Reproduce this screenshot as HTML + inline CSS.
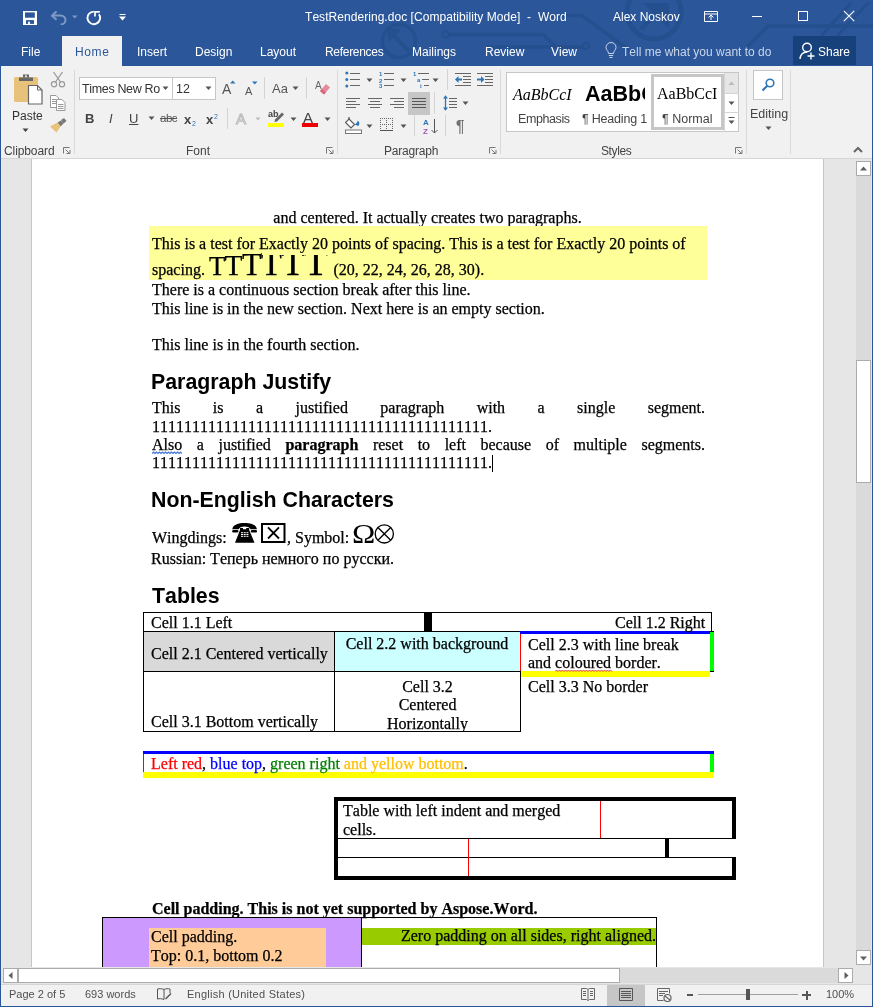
<!DOCTYPE html>
<html><head><meta charset="utf-8">
<style>
*{margin:0;padding:0;box-sizing:border-box;font-kerning:none !important}
html,body{width:873px;height:1007px;overflow:hidden;font-kerning:none;background:#2b579a;font-family:"Liberation Sans",sans-serif}
.a{position:absolute}
.t{position:absolute;white-space:nowrap;line-height:1}
#title{left:0;top:0;width:873px;height:66px;background:#2b579a}
#ribbon{left:1px;top:66px;width:871px;height:93px;background:#f1f1f1;border-bottom:1px solid #d5d5d5}
#doc{left:1px;top:159px;width:871px;height:808px;background:#e6e6e6;overflow:hidden}
#page{left:30px;top:0;width:793px;height:808px;background:#fff;border-left:1px solid #c6c6c6;border-right:1px solid #c6c6c6}
#hs{left:1px;top:967px;width:871px;height:18px;background:#e6e6e6}
#status{left:1px;top:984px;width:871px;height:22px;background:#f1f1f1;border-top:1px solid #d5d5d5}
.ui{color:#fff;font-size:12px}
.rb{color:#444;font-size:12px}
.sep{position:absolute;width:1px;background:#d8d8d8}
.s{position:absolute;white-space:nowrap;font:16px/18px "Liberation Serif",serif;color:#000;-webkit-text-stroke-width:0.25px}
.j{width:553px;text-align:justify;text-align-last:justify}
.h{position:absolute;white-space:nowrap;font:bold 21.33px/24px "Liberation Sans",sans-serif;color:#000}
.big{line-height:0;letter-spacing:-0.6px}
.serif{font-family:"Liberation Serif",serif;color:#000}
.gs{will-change:transform}</style></head><body><div class="gs a" style="left:0;top:0;width:873px;height:1007px">
<div id="title" class="a"></div>
<svg class="a" style="left:0;top:0" width="873" height="66" viewBox="0 0 873 66">
<g fill="none" stroke="#24508f" stroke-width="3.5">
<circle cx="399" cy="41" r="16.5"/>
<path d="M409,51 L392,34" stroke-width="4.5"/><path d="M387,28 L401,29.5 L388.5,42 Z" fill="#24508f" stroke="none"/>
<circle cx="445.5" cy="34.5" r="3.2" stroke-width="2.2"/>
<path d="M449,34.5 H543 L556,47 H582 M487,47 H556"/>
<path d="M540,15.5 H582 L633,53"/>
<circle cx="586" cy="46" r="3.2" stroke-width="2.2"/>
<circle cx="654" cy="12" r="27" stroke-width="5"/>
<path d="M641,29 L662,8" stroke-width="5"/><path d="M643,3 L669,3 L669,29 Z" fill="#24508f" stroke="none"/>
<path d="M747,47 L768,26 H873"/>
<path d="M821,36 L851,3 M837,36 L869,2" stroke-width="3"/>
</g>
</svg>
<svg class="a" style="left:23px;top:11px" width="14" height="14" viewBox="0 0 14 14">
<rect x="0" y="0" width="14" height="14" fill="#fff"/>
<rect x="2" y="1.4" width="9.8" height="5.3" fill="#2b579a"/>
<rect x="3" y="9.1" width="8" height="3.8" fill="#2b579a"/>
<rect x="5" y="10.7" width="2" height="2.2" fill="#fff"/>
</svg>
<svg class="a" style="left:51px;top:11px" width="16" height="14" viewBox="0 0 16 14">
<path d="M1.5,5.5 h8 a5,4.5 0 0 1 0,9" fill="none" stroke="#7d9ac4" stroke-width="2" transform="translate(0,-1)"/>
<path d="M5.5,0.8 L1,5.2 L5.5,9.2" fill="none" stroke="#7d9ac4" stroke-width="2" transform="translate(0,-0.5)"/>
</svg>
<svg class="a" style="left:72px;top:15px" width="6" height="4"><path d="M0,0.5 h5.5 l-2.75,3 z" fill="#7d9ac4"/></svg>
<svg class="a" style="left:86px;top:10px" width="16" height="16" viewBox="0 0 16 16">
<path d="M12.9,4.2 A6.3,6.3 0 1 1 7.8,1.6" fill="none" stroke="#fff" stroke-width="1.9"/>
<path d="M9,6.5 V1.9 H13.8" fill="none" stroke="#fff" stroke-width="1.7"/>
</svg>
<svg class="a" style="left:119px;top:14px" width="7" height="7" viewBox="0 0 7 7"><path d="M0.5,0.5 h6" stroke="#fff"/><path d="M0,2.5 h7 l-3.5,4 z" fill="#fff"/></svg>
<svg class="a" style="left:704px;top:11px" width="14" height="11" viewBox="0 0 14 11">
<path d="M0.5,0.5 h13 v10 h-13 z M0.5,3 h13" fill="none" stroke="#fff" stroke-width="1"/>
<path d="M7,9 v-5 M4.5,6.5 L7,4 L9.5,6.5" fill="none" stroke="#fff" stroke-width="1"/>
</svg>
<div class="a" style="left:752px;top:16px;width:10px;height:1px;background:#fff"></div>
<div class="a" style="left:798px;top:11px;width:10px;height:10px;border:1px solid #fff"></div>
<svg class="a" style="left:843px;top:10px" width="12" height="12" viewBox="0 0 12 12"><path d="M0.8,0.8 L11.2,11.2 M11.2,0.8 L0.8,11.2" stroke="#fff" stroke-width="1.1"/></svg>
<svg class="a" style="left:605px;top:42px" width="12" height="17" viewBox="0 0 12 17">
<path d="M3.5,11.5 C3.5,9 1,8 1,5.5 A5,5 0 0 1 11,5.5 C11,8 8.5,9 8.5,11.5 Z" fill="none" stroke="#c8d5e9" stroke-width="1"/>
<path d="M3.8,13.5 h4.4 M4.5,15.5 h3" stroke="#c8d5e9" stroke-width="1"/></svg>

<!-- title text -->
<div class="t ui" style="left:305px;top:11px;letter-spacing:0.05px">TestRendering.doc [Compatibility Mode]&nbsp; -&nbsp; Word</div>
<div class="t ui" style="left:613px;top:11px;">Alex Noskov</div>
<!-- tabs -->
<div class="a" style="left:62px;top:36px;width:60px;height:30px;background:#f1f1f1"></div>
<div class="t ui" style="left:21px;top:46px;">File</div>
<div class="t ui" style="left:75px;top:46px;color:#2b579a;letter-spacing:0.6px">Home</div>
<div class="t ui" style="left:137px;top:46px;">Insert</div>
<div class="t ui" style="left:195px;top:46px;">Design</div>
<div class="t ui" style="left:260px;top:46px;">Layout</div>
<div class="t ui" style="left:325px;top:46px;letter-spacing:-0.3px">References</div>
<div class="t ui" style="left:412px;top:46px;">Mailings</div>
<div class="t ui" style="left:485px;top:46px;">Review</div>
<div class="t ui" style="left:551px;top:46px;">View</div>
<div class="t ui" style="left:622px;top:46px;color:#c8d5e9">Tell me what you want to do</div>
<div class="a" style="left:793px;top:36px;width:63px;height:29px;background:#17417a"></div>
<svg class="a" style="left:799px;top:42px" width="18" height="18" viewBox="0 0 18 18">
<circle cx="8" cy="5.5" r="4.3" fill="none" stroke="#fff" stroke-width="1.4"/>
<path d="M1,17 C1.5,12.5 4,10 8,10" fill="none" stroke="#fff" stroke-width="1.4"/>
<path d="M12,10.5 v7 M8.5,14 h7" stroke="#fff" stroke-width="1.4"/></svg>
<div class="t ui" style="left:818px;top:46px;">Share</div>

<div id="ribbon" class="a"></div>
<!-- clipboard -->
<svg class="a" style="left:12px;top:72px" width="34" height="34" viewBox="0 0 34 34">
<rect x="2" y="5" width="24" height="25" rx="1.5" fill="#e8c17a"/>
<path d="M7,5.5 h14 v3.5 h-14 z" fill="#666"/>
<path d="M11,2.5 h6 v3 h-6 z" fill="#666"/><circle cx="14" cy="4.2" r="1" fill="#f1f1f1"/>
<path d="M16.5,13.5 h9 l4.5,4.5 v14 h-13.5 z" fill="#fff" stroke="#666" stroke-width="1.2"/>
<path d="M25.5,13.5 v4.5 h4.5" fill="none" stroke="#666" stroke-width="1"/>
</svg>
<div class="t rb" style="left:12px;top:110px;font-size:12px;color:#333">Paste</div>
<svg class="a" style="left:22px;top:128px" width="7" height="5"><path d="M0.5,0.5 h6 l-3,3.5 z" fill="#444"/></svg>
<svg class="a" style="left:50px;top:71px" width="16" height="17" viewBox="0 0 16 17">
<path d="M3.5,1 L10.5,11 M12.5,1 L5.5,11" stroke="#9a9a9a" stroke-width="1.3"/>
<circle cx="4" cy="13.3" r="2.6" fill="none" stroke="#9a9a9a" stroke-width="1.2"/>
<circle cx="12" cy="13.3" r="2.6" fill="none" stroke="#9a9a9a" stroke-width="1.2"/>
</svg>
<svg class="a" style="left:50px;top:95px" width="16" height="16" viewBox="0 0 16 16">
<path d="M0.5,0.5 h5.5 l2.5,2.5 v9.5 h-8 z" fill="#fff" stroke="#999"/>
<path d="M6.5,4.5 h5.5 l3,3 v8 h-8.5 z" fill="#fff" stroke="#999"/>
<path d="M2,4.5 h4 M2,6.5 h4 M2,8.5 h4 M8,9.5 h5.5 M8,11.5 h5.5 M8,13.5 h5.5" stroke="#999" stroke-width="1"/>
</svg>
<svg class="a" style="left:50px;top:118px" width="17" height="15" viewBox="0 0 17 15">
<path d="M11,2 L14,0 L16.5,3 L13.5,5.5 Z" fill="#777"/>
<path d="M7.5,4.5 L11,2.5 L13.5,5.5 L10.5,8.5 Z" fill="#777"/>
<path d="M0,8.5 L7.5,4.5 L10.5,8.5 L6.5,14.5 Z" fill="#e8c17a"/>
</svg>
<div class="t rb" style="left:4px;top:145px;letter-spacing:-0.1px">Clipboard</div>
<svg class="a" style="left:63px;top:147px" width="8" height="7" viewBox="0 0 8 7"><path d="M0.5,6.5 v-6 h6 M0.5,0.5" fill="none" stroke="#777"/><path d="M2.5,2.5 L6.5,6.5 M3.5,6.5 h3.5 v-3.5" fill="none" stroke="#777"/></svg>
<div class="sep" style="left:74px;top:70px;height:84px"></div>
<!-- font -->
<div class="a" style="left:79px;top:77px;width:137px;height:23px;background:#fff;border:1px solid #c6c6c6"></div>
<div class="a" style="left:172px;top:77px;width:1px;height:23px;background:#c6c6c6"></div>
<div class="t" style="left:82px;top:83px;font-size:12.5px;color:#333;letter-spacing:-0.35px">Times New Ro</div>
<svg class="a" style="left:162px;top:86px" width="7" height="5"><path d="M0.5,0.5 h6 l-3,3.5 z" fill="#555"/></svg>
<div class="t" style="left:176px;top:83px;font-size:12.5px;color:#333">12</div>
<svg class="a" style="left:205px;top:86px" width="7" height="5"><path d="M0.5,0.5 h6 l-3,3.5 z" fill="#555"/></svg>
<div class="t" style="left:222px;top:82px;font-size:14px;color:#555">A</div>
<svg class="a" style="left:230px;top:80px" width="6" height="4"><path d="M0,3.5 h5.5 l-2.75,-3 z" fill="#2e75b6"/></svg>
<div class="t" style="left:245px;top:86px;font-size:11px;color:#555">A</div>
<svg class="a" style="left:252px;top:81px" width="6" height="4"><path d="M0,0.5 h5.5 l-2.75,3 z" fill="#2e75b6"/></svg>
<div class="sep" style="left:264px;top:77px;height:22px;background:#d4d4d4"></div>
<div class="t" style="left:272px;top:82px;font-size:13px;color:#555">Aa</div>
<svg class="a" style="left:292px;top:86px" width="7" height="5"><path d="M0.5,0.5 h6 l-3,3.5 z" fill="#555"/></svg>
<div class="sep" style="left:306px;top:77px;height:22px;background:#d4d4d4"></div>
<svg class="a" style="left:315px;top:80px" width="16" height="16" viewBox="0 0 16 16">
<text x="0" y="9" font-family="Liberation Sans" font-size="10" fill="#666">A</text>
<path d="M5,11 L11,4 L15,7.5 L9,14.5 Z" fill="#e58a9a"/><path d="M5,11 L7,9 L11,12.5 L9,14.5 Z" fill="#d7667c"/>
</svg>
<div class="t" style="left:85px;top:112px;font-size:13px;font-weight:bold;color:#444">B</div>
<div class="t" style="left:109px;top:112px;font-size:13px;font-style:italic;color:#444">I</div>
<div class="t" style="left:129px;top:112px;font-size:13px;color:#444;text-decoration:underline">U</div>
<svg class="a" style="left:148px;top:116px" width="7" height="5"><path d="M0.5,0.5 h6 l-3,3.5 z" fill="#555"/></svg>
<div class="t" style="left:160px;top:113px;font-size:11.5px;color:#555;text-decoration:line-through;letter-spacing:-0.5px">abc</div>
<div class="t" style="left:184px;top:113px;font-size:13px;font-weight:bold;color:#444">x</div>
<div class="t" style="left:192px;top:120px;font-size:7px;color:#2e75b6">2</div>
<div class="t" style="left:206px;top:113px;font-size:13px;font-weight:bold;color:#444">x</div>
<div class="t" style="left:214px;top:113px;font-size:7px;color:#2e75b6">2</div>
<div class="sep" style="left:227px;top:108px;height:21px;background:#d4d4d4"></div>
<div class="t" style="left:236px;top:111px;font-size:15px;color:#f4f4f4;-webkit-text-stroke:1px #bbb">A</div>
<svg class="a" style="left:255px;top:117px" width="6" height="4"><path d="M0.5,0.5 h5 l-2.5,3 z" fill="#bbb"/></svg>
<div class="t" style="left:268px;top:110px;font-size:9px;color:#444;font-weight:bold">ab</div>
<svg class="a" style="left:272px;top:110px" width="12" height="12" viewBox="0 0 12 12"><path d="M3,9.5 L10,2.5 L12,4.5 L5,11.5 L2.5,12 Z" fill="#666"/></svg>
<div class="a" style="left:268px;top:123px;width:16px;height:4px;background:#ffff00"></div>
<svg class="a" style="left:290px;top:117px" width="7" height="5"><path d="M0.5,0.5 h6 l-3,3.5 z" fill="#555"/></svg>
<div class="t" style="left:303px;top:110px;font-size:15px;color:#444">A</div>
<div class="a" style="left:302px;top:123px;width:16px;height:4px;background:#e00"></div>
<svg class="a" style="left:324px;top:117px" width="7" height="5"><path d="M0.5,0.5 h6 l-3,3.5 z" fill="#555"/></svg>
<div class="t rb" style="left:186px;top:145px">Font</div>
<svg class="a" style="left:326px;top:147px" width="8" height="7" viewBox="0 0 8 7"><path d="M0.5,6.5 v-6 h6" fill="none" stroke="#777"/><path d="M2.5,2.5 L6.5,6.5 M3.5,6.5 h3.5 v-3.5" fill="none" stroke="#777"/></svg>
<div class="sep" style="left:337px;top:70px;height:84px"></div>
<!-- paragraph -->
<svg class="a" style="left:345px;top:71px" width="16" height="17" viewBox="0 0 16 17">
<circle cx="1.8" cy="2" r="1.5" fill="#2e75b6"/><circle cx="1.8" cy="8.5" r="1.5" fill="#2e75b6"/><circle cx="1.8" cy="15" r="1.5" fill="#2e75b6"/>
<path d="M5,2.5 h10 M5,8.5 h10 M5,14.5 h10" stroke="#666" stroke-width="1"/></svg>
<svg class="a" style="left:366px;top:78px" width="7" height="5"><path d="M0.5,0.5 h6 l-3,3.5 z" fill="#555"/></svg>
<svg class="a" style="left:379px;top:71px" width="16" height="17" viewBox="0 0 16 17">
<text x="0" y="5" font-size="6" font-family="Liberation Sans" font-weight="bold" fill="#2e75b6">1</text>
<text x="0" y="11.5" font-size="6" font-family="Liberation Sans" font-weight="bold" fill="#2e75b6">2</text>
<text x="0" y="17" font-size="6" font-family="Liberation Sans" font-weight="bold" fill="#2e75b6">3</text>
<path d="M5,2.5 h10 M5,8.5 h10 M5,14.5 h10" stroke="#666" stroke-width="1"/></svg>
<svg class="a" style="left:400px;top:78px" width="7" height="5"><path d="M0.5,0.5 h6 l-3,3.5 z" fill="#555"/></svg>
<svg class="a" style="left:413px;top:71px" width="17" height="17" viewBox="0 0 17 17">
<text x="0" y="5" font-size="6" font-family="Liberation Sans" font-weight="bold" fill="#2e75b6">1</text>
<text x="4" y="11" font-size="6" font-family="Liberation Sans" font-weight="bold" fill="#2e75b6">a</text>
<text x="7" y="17" font-size="6" font-family="Liberation Sans" font-weight="bold" fill="#2e75b6">i</text>
<path d="M5,2.5 h11 M9,8.5 h7 M11,14.5 h5" stroke="#666" stroke-width="1"/></svg>
<svg class="a" style="left:432px;top:78px" width="7" height="5"><path d="M0.5,0.5 h6 l-3,3.5 z" fill="#555"/></svg>
<div class="sep" style="left:447px;top:69px;height:21px;background:#d4d4d4"></div>
<svg class="a" style="left:455px;top:73px" width="17" height="14" viewBox="0 0 17 14">
<path d="M0,0.5 h16 M8,3.5 h8 M8,6.5 h8 M8,9.5 h8 M0,12.5 h16" stroke="#666" stroke-width="1"/>
<path d="M0,6.5 L3.5,3 L3.5,10 Z" fill="#2e75b6"/><path d="M3,6.5 h4" stroke="#2e75b6" stroke-width="2"/></svg>
<svg class="a" style="left:477px;top:73px" width="17" height="14" viewBox="0 0 17 14">
<path d="M0,0.5 h16 M8,3.5 h8 M8,6.5 h8 M8,9.5 h8 M0,12.5 h16" stroke="#666" stroke-width="1"/>
<path d="M7.5,6.5 L4,3 L4,10 Z" fill="#2e75b6"/><path d="M0,6.5 h4.5" stroke="#2e75b6" stroke-width="2"/></svg>
<svg class="a" style="left:345px;top:97px" width="16" height="12" viewBox="0 0 16 12">
<path d="M1,1.5 h14 M1,4.5 h10 M1,7.5 h14 M1,10.5 h10" stroke="#666" stroke-width="1"/></svg>
<svg class="a" style="left:367px;top:97px" width="16" height="12" viewBox="0 0 16 12">
<path d="M1,1.5 h14 M3,4.5 h10 M1,7.5 h14 M3,10.5 h10" stroke="#666" stroke-width="1"/></svg>
<svg class="a" style="left:389px;top:97px" width="16" height="12" viewBox="0 0 16 12">
<path d="M1,1.5 h14 M5,4.5 h10 M1,7.5 h14 M5,10.5 h10" stroke="#666" stroke-width="1"/></svg>
<div class="a" style="left:408px;top:92px;width:22px;height:23px;background:#c6c6c6"></div>
<svg class="a" style="left:412px;top:97px" width="16" height="12" viewBox="0 0 16 12">
<path d="M0,1.5 h14 M0,4.5 h14 M0,7.5 h14 M0,10.5 h14" stroke="#555" stroke-width="1"/></svg>
<div class="sep" style="left:434px;top:92px;height:22px;background:#d4d4d4"></div>
<svg class="a" style="left:443px;top:95px" width="15" height="17" viewBox="0 0 15 17">
<path d="M2.5,2 v13" stroke="#2e75b6" stroke-width="1.3"/><path d="M0,3.5 L2.5,0.3 L5,3.5 Z M0,12.5 L2.5,15.7 L5,12.5 Z" fill="#2e75b6"/>
<path d="M6,3.5 h8 M6,6.5 h8 M6,9.5 h8 M6,12.5 h8" stroke="#666" stroke-width="1"/></svg>
<svg class="a" style="left:462px;top:101px" width="7" height="5"><path d="M0.5,0.5 h6 l-3,3.5 z" fill="#555"/></svg>
<svg class="a" style="left:345px;top:117px" width="17" height="17" viewBox="0 0 17 17">
<path d="M4,2 L9.5,7.5 L6,11 L0.5,5.5 Z" fill="#fff" stroke="#555" stroke-width="1.1"/>
<path d="M4,2 L4,0" stroke="#555" stroke-width="1.2"/>
<path d="M9.5,7.5 C12,6 13,4.5 12.5,3.5 C14.5,4.5 15,6.5 13.5,9" fill="#2e75b6"/>
<rect x="0.5" y="13" width="16" height="3.5" fill="#fff" stroke="#777" stroke-width="1"/></svg>
<svg class="a" style="left:366px;top:124px" width="7" height="5"><path d="M0.5,0.5 h6 l-3,3.5 z" fill="#555"/></svg>
<svg class="a" style="left:380px;top:118px" width="14" height="14" viewBox="0 0 14 14"><g fill="#666"><rect x="0" y="0" width="1" height="1"/><rect x="2" y="0" width="1" height="1"/><rect x="4" y="0" width="1" height="1"/><rect x="6" y="0" width="1" height="1"/><rect x="8" y="0" width="1" height="1"/><rect x="10" y="0" width="1" height="1"/><rect x="12" y="0" width="1" height="1"/><rect x="0" y="2" width="1" height="1"/><rect x="6" y="2" width="1" height="1"/><rect x="12" y="2" width="1" height="1"/><rect x="0" y="4" width="1" height="1"/><rect x="6" y="4" width="1" height="1"/><rect x="12" y="4" width="1" height="1"/><rect x="0" y="6" width="1" height="1"/><rect x="2" y="6" width="1" height="1"/><rect x="4" y="6" width="1" height="1"/><rect x="6" y="6" width="1" height="1"/><rect x="8" y="6" width="1" height="1"/><rect x="10" y="6" width="1" height="1"/><rect x="12" y="6" width="1" height="1"/><rect x="0" y="8" width="1" height="1"/><rect x="6" y="8" width="1" height="1"/><rect x="12" y="8" width="1" height="1"/><rect x="0" y="10" width="1" height="1"/><rect x="6" y="10" width="1" height="1"/><rect x="12" y="10" width="1" height="1"/></g>
<rect x="0" y="12" width="13" height="1" fill="#555"/></svg>
<svg class="a" style="left:400px;top:124px" width="7" height="5"><path d="M0.5,0.5 h6 l-3,3.5 z" fill="#555"/></svg>
<div class="sep" style="left:414px;top:115px;height:21px;background:#d4d4d4"></div>
<svg class="a" style="left:423px;top:118px" width="15" height="16" viewBox="0 0 15 16">
<text x="0" y="7" font-size="8" font-family="Liberation Sans" font-weight="bold" fill="#2e75b6">A</text>
<text x="0" y="15.5" font-size="8" font-family="Liberation Sans" font-weight="bold" fill="#9b59b6">Z</text>
<path d="M11.5,1 v14 M8.5,12 L11.5,15 L14.5,12" fill="none" stroke="#555" stroke-width="1"/></svg>
<div class="sep" style="left:445px;top:115px;height:21px;background:#d4d4d4"></div>
<div class="t" style="left:456px;top:119px;font-size:16px;color:#707070;-webkit-text-stroke:0.2px #707070">&#182;</div>
<div class="t rb" style="left:384px;top:145px;letter-spacing:-0.2px">Paragraph</div>
<svg class="a" style="left:489px;top:147px" width="8" height="7" viewBox="0 0 8 7"><path d="M0.5,6.5 v-6 h6" fill="none" stroke="#777"/><path d="M2.5,2.5 L6.5,6.5 M3.5,6.5 h3.5 v-3.5" fill="none" stroke="#777"/></svg>
<div class="sep" style="left:500px;top:70px;height:84px"></div>
<!-- styles -->
<div class="a" style="left:506px;top:72px;width:233px;height:60px;background:#fff;border:1px solid #c6c6c6"></div>
<div class="a" style="left:651px;top:74px;width:73px;height:56px;border:3px solid #c6c6c6"></div>
<div class="a" style="left:724px;top:73px;width:14px;height:20px;background:#e6e6e6;border-left:1px solid #d4d4d4"></div>
<svg class="a" style="left:728px;top:81px" width="7" height="5"><path d="M0.5,4 h6 l-3,-3.5 z" fill="#bbb"/></svg>
<div class="a" style="left:724px;top:93px;width:15px;height:1px;background:#d4d4d4"></div>
<div class="a" style="left:724px;top:93px;width:1px;height:39px;background:#d4d4d4"></div>
<svg class="a" style="left:728px;top:101px" width="7" height="5"><path d="M0.5,0.5 h6 l-3,3.5 z" fill="#555"/></svg>
<div class="a" style="left:724px;top:112px;width:15px;height:1px;background:#d4d4d4"></div>
<svg class="a" style="left:728px;top:117px" width="7" height="9"><path d="M0.5,0.5 h6" stroke="#555"/><path d="M0.5,3.5 h6 l-3,3.5 z" fill="#555"/></svg>
<div class="t" style="left:513px;top:86px;font:italic 16px 'Liberation Serif';color:#000">AaBbCcI</div>
<div class="t" style="left:585px;top:82px;width:60px;overflow:hidden;font:bold 21.5px 'Liberation Sans';color:#000">AaBbC</div>
<div class="t" style="left:657px;top:85px;font:16px 'Liberation Serif';color:#000">AaBbCcI</div>
<div class="t rb" style="left:518px;top:113px;font-size:12.5px;letter-spacing:-0.4px">Emphasis</div>
<div class="t rb" style="left:582px;top:113px;font-size:12.5px;letter-spacing:-0.2px">&#182; Heading 1</div>
<div class="t rb" style="left:662px;top:113px;font-size:12.5px">&#182; Normal</div>
<div class="t rb" style="left:601px;top:145px;letter-spacing:-0.4px">Styles</div>
<svg class="a" style="left:735px;top:147px" width="8" height="7" viewBox="0 0 8 7"><path d="M0.5,6.5 v-6 h6" fill="none" stroke="#777"/><path d="M2.5,2.5 L6.5,6.5 M3.5,6.5 h3.5 v-3.5" fill="none" stroke="#777"/></svg>
<div class="sep" style="left:746px;top:70px;height:84px"></div>
<!-- editing -->
<div class="a" style="left:753px;top:70px;width:30px;height:30px;background:#fff;border:1px solid #c6c6c6"></div>
<svg class="a" style="left:760px;top:77px" width="16" height="16" viewBox="0 0 16 16">
<circle cx="10" cy="6" r="3.8" fill="none" stroke="#2e75b6" stroke-width="1.6"/><path d="M7.3,8.7 L2.5,13.5" stroke="#2e75b6" stroke-width="2"/></svg>
<div class="t rb" style="left:750px;top:108px;font-size:12.5px">Editing</div>
<svg class="a" style="left:765px;top:126px" width="7" height="5"><path d="M0.5,0.5 h6 l-3,3.5 z" fill="#555"/></svg>
<div class="sep" style="left:790px;top:70px;height:84px"></div>
<svg class="a" style="left:853px;top:146px" width="10" height="7" viewBox="0 0 10 7"><path d="M1,6 L5,2 L9,6" fill="none" stroke="#666" stroke-width="2"/></svg>


<div id="doc" class="a"><div id="page" class="a"></div>
<div class="a" style="left:-1px;top:-159px;width:873px;height:1007px">
<div class="s" style="left:0;width:855px;top:209px;text-align:center">and centered. It actually creates two paragraphs.</div>
<div class="a" style="left:149px;top:226px;width:558px;height:54px;background:#ffff99"></div>
<div class="s" style="left:152px;top:235px">This is a test for Exactly 20 points of spacing. This is a test for Exactly 20 points of</div>
<div class="a" style="left:149px;top:253px;width:558px;height:27px;overflow:hidden">
 <div class="s" style="left:3px;top:8px">spacing. <span class="big" style="font-size:26.67px">T</span><span class="big" style="font-size:29.33px">T</span><span class="big" style="font-size:32px">T</span><span class="big" style="font-size:34.67px">T</span><span class="big" style="font-size:37.33px">T</span><span class="big" style="font-size:40px">T</span><span style="margin-left:2px"> (20, 22, 24, 26, 28, 30).</span></div>
</div>
<div class="a" style="left:262px;top:253px;width:70px;height:2px;background:#ffff99"></div>
<div class="s" style="left:152px;top:281px">There is a continuous section break after this line.</div>
<div class="s" style="left:152px;top:300px">This line is in the new section. Next here is an empty section.</div>
<div class="s" style="left:152px;top:336px">This line is in the fourth section.</div>
<div class="h" style="left:151px;top:370px">Paragraph Justify</div>
<div class="s j" style="left:152px;top:399px">This is a justified paragraph with a single segment.</div>
<div class="s" style="left:152px;top:418px">111111111111111111111111111111111111111111.</div>
<div class="s j" style="left:152px;top:436px"><span style="position:relative">Also<svg class="a" style="left:0;top:15px" width="30" height="4" viewBox="0 0 30 4"><path d="M0 2.5 L1.5 1 L3 2.5 L4.5 1 L6 2.5 L7.5 1 L9 2.5 L10.5 1 L12 2.5 L13.5 1 L15 2.5 L16.5 1 L18 2.5 L19.5 1 L21 2.5 L22.5 1 L24 2.5 L25.5 1 L27 2.5 L28.5 1 L30 2.5" fill="none" stroke="#3f73d9" stroke-width="1.2"/></svg></span> a justified <b>paragraph</b> reset to left because of multiple segments.</div>
<div class="s" style="left:152px;top:454px">111111111111111111111111111111111111111111.<span style="display:inline-block;width:1px;height:17px;background:#000;vertical-align:-4px"></span></div>
<div class="h" style="left:151px;top:488px">Non-English Characters</div>
<div class="s" style="left:152px;top:529px">Wingdings: </div>
<div class="s" style="left:287px;top:529px">, Symbol: </div>
<div class="s" style="left:151px;top:550px">Russian: Теперь немного по русски.</div>
<div class="h" style="left:152px;top:584px">Tables</div>
<svg class="a" style="left:232px;top:523px" width="26" height="20" viewBox="0 0 26 20">
<path d="M0.3,6.3 C0.8,1.6 6.5,0 12.6,0 C18.7,0 24.4,1.6 24.9,6.3 L18.6,6.3 C17.4,4.2 15.2,3.6 12.6,3.6 C10,3.6 7.8,4.2 6.6,6.3 Z" fill="#000"/>
<rect x="0.2" y="6.9" width="6.2" height="2.6" rx="1.2" fill="#000"/>
<rect x="18.8" y="6.9" width="6.2" height="2.6" rx="1.2" fill="#000"/>
<path d="M8,4.9 L11,4.9 L11,6.3 L14.2,6.3 L14.2,4.9 L17.2,4.9 L17.2,7 L22.5,19.8 L3,19.8 L8,7 Z" fill="#000"/>
<g fill="#fff"><rect x="9" y="9.2" width="2" height="1"/><rect x="11.7" y="9.2" width="2" height="1"/><rect x="14.4" y="9.2" width="2" height="1"/>
<rect x="9" y="11" width="2" height="1"/><rect x="11.7" y="11" width="2" height="1"/><rect x="14.4" y="11" width="2" height="1"/>
<rect x="9" y="12.8" width="2" height="1"/><rect x="11.7" y="12.8" width="2" height="1"/><rect x="14.4" y="12.8" width="2" height="1"/></g>
</svg>
<svg class="a" style="left:261px;top:523px" width="25" height="20" viewBox="0 0 25 20">
<rect x="1" y="1" width="22.5" height="18" fill="none" stroke="#000" stroke-width="2"/>
<path d="M7,4.3 L18,15.5 M18,4.3 L7,15.5" stroke="#000" stroke-width="1.8"/>
</svg>
<div class="a" style="left:352px;top:519px;font:28px/30px 'Liberation Serif';color:#000;transform:scaleX(1.12);transform-origin:0 0">&#937;</div>
<svg class="a" style="left:374px;top:524px" width="21" height="20" viewBox="0 0 21 20">
<circle cx="10.3" cy="9.9" r="9.1" fill="none" stroke="#000" stroke-width="1.3"/>
<path d="M3.9,3.5 L16.7,16.3 M16.7,3.5 L3.9,16.3" stroke="#000" stroke-width="1.3"/>
</svg>
<!-- Table 1 -->
<div class="a" style="left:143px;top:632px;width:191px;height:39px;background:#d9d9d9"></div>
<div class="a" style="left:334px;top:632px;width:186px;height:39px;background:#ccffff"></div>
<div class="a" style="left:143px;top:612px;width:569px;height:1px;background:#000"></div>
<div class="a" style="left:143px;top:631px;width:377px;height:1px;background:#000"></div>
<div class="a" style="left:143px;top:671px;width:377px;height:1px;background:#000"></div>
<div class="a" style="left:143px;top:731px;width:378px;height:1px;background:#000"></div>
<div class="a" style="left:143px;top:612px;width:1px;height:120px;background:#000"></div>
<div class="a" style="left:711px;top:612px;width:1px;height:20px;background:#000"></div>
<div class="a" style="left:424px;top:612px;width:8px;height:20px;background:#000"></div>
<div class="a" style="left:334px;top:631px;width:1px;height:101px;background:#000"></div>
<div class="a" style="left:520px;top:671px;width:1px;height:61px;background:#000"></div>
<div class="a" style="left:520px;top:634px;width:1px;height:37px;background:#f00"></div>
<div class="a" style="left:520px;top:631px;width:190px;height:3px;background:#00f"></div>
<div class="a" style="left:710px;top:631px;width:4px;height:41px;background:#000"></div>
<div class="a" style="left:710px;top:632px;width:4px;height:39px;background:#0f0"></div>
<div class="a" style="left:521px;top:671px;width:189px;height:6px;background:#ff0"></div>
<div class="s" style="left:151px;top:614px">Cell 1.1 Left</div>
<div class="s" style="left:615px;top:614px;width:90px;text-align:right">Cell 1.2 Right</div>
<div class="s" style="left:151px;top:645px">Cell 2.1 Centered vertically</div>
<div class="s" style="left:334px;top:635px;width:186px;text-align:center">Cell 2.2 with background</div>
<div class="s" style="left:528px;top:636px">Cell 2.3 with line break</div>
<div class="s" style="left:528px;top:654px">and <span style="position:relative">coloured<svg class="a" style="left:0;top:15px" width="58" height="4" viewBox="0 0 58 4"><path d="M0 2.5 L1.5 1 L3 2.5 L4.5 1 L6 2.5 L7.5 1 L9 2.5 L10.5 1 L12 2.5 L13.5 1 L15 2.5 L16.5 1 L18 2.5 L19.5 1 L21 2.5 L22.5 1 L24 2.5 L25.5 1 L27 2.5 L28.5 1 L30 2.5 L31.5 1 L33 2.5 L34.5 1 L36 2.5 L37.5 1 L39 2.5 L40.5 1 L42 2.5 L43.5 1 L45 2.5 L46.5 1 L48 2.5 L49.5 1 L51 2.5 L52.5 1 L54 2.5 L55.5 1 L57 2.5" fill="none" stroke="#e03030" stroke-width="1"/></svg></span> border.</div>
<div class="a" style="left:144px;top:672px;width:190px;height:59px;overflow:hidden"><div class="s" style="left:7px;top:41px">Cell 3.1 Bottom vertically</div></div>
<div class="a" style="left:335px;top:672px;width:185px;height:59px;overflow:hidden">
<div class="s" style="left:0;top:6px;width:185px;text-align:center">Cell 3.2</div>
<div class="s" style="left:0;top:24px;width:185px;text-align:center">Centered</div>
<div class="s" style="left:0;top:43px;width:185px;text-align:center">Horizontally</div></div>
<div class="s" style="left:528px;top:678px">Cell 3.3 No border</div>
<!-- colored border paragraph -->
<div class="a" style="left:143px;top:751px;width:571px;height:3px;background:#00f"></div>
<div class="a" style="left:143px;top:754px;width:1px;height:18px;background:#f00"></div>
<div class="a" style="left:710px;top:754px;width:4px;height:18px;background:#0f0"></div>
<div class="a" style="left:143px;top:772px;width:571px;height:6px;background:#ff0"></div>
<div class="s" style="left:151px;top:755px"><span style="color:#f00">Left red</span>, <span style="color:#00f">blue top</span>, <span style="color:#008000">green right</span> <span style="color:#ffc000">and yellow bottom</span>.</div>
<!-- table with left indent -->
<div class="a" style="left:334px;top:797px;width:402px;height:4px;background:#000"></div>
<div class="a" style="left:334px;top:797px;width:4px;height:83px;background:#000"></div>
<div class="a" style="left:334px;top:876px;width:402px;height:4px;background:#000"></div>
<div class="a" style="left:732px;top:797px;width:4px;height:42px;background:#000"></div>
<div class="a" style="left:732px;top:857px;width:4px;height:23px;background:#000"></div>
<div class="a" style="left:338px;top:838px;width:398px;height:1px;background:#000"></div>
<div class="a" style="left:338px;top:857px;width:398px;height:1px;background:#000"></div>
<div class="a" style="left:665px;top:839px;width:4px;height:18px;background:#000"></div>
<div class="a" style="left:600px;top:801px;width:1px;height:37px;background:#f00"></div>
<div class="a" style="left:468px;top:839px;width:1px;height:37px;background:#f00"></div>
<div class="s" style="left:343px;top:802px">Table with left indent and merged</div>
<div class="s" style="left:343px;top:821px">cells.</div>
<!-- cell padding -->
<div class="s" style="left:152px;top:900px;font-weight:bold">Cell padding. This is not yet supported by Aspose.Word.</div>
<div class="a" style="left:102px;top:917px;width:555px;height:1px;background:#000"></div>
<div class="a" style="left:102px;top:917px;width:1px;height:60px;background:#000"></div>
<div class="a" style="left:361px;top:917px;width:1px;height:60px;background:#000"></div>
<div class="a" style="left:656px;top:917px;width:1px;height:60px;background:#000"></div>
<div class="a" style="left:103px;top:918px;width:258px;height:60px;background:#cc99ff"></div>
<div class="a" style="left:149px;top:928px;width:177px;height:50px;background:#ffcc99"></div>
<div class="a" style="left:362px;top:928px;width:294px;height:17px;background:#99cc00"></div>
<div class="s" style="left:151px;top:928px">Cell padding.</div>
<div class="s" style="left:151px;top:947px">Top: 0.1, bottom 0.2</div>
<div class="s" style="left:400px;top:927px;width:256px;text-align:right">Zero padding on all sides, right aligned.</div>

</div>
</div>
<div id="hs" class="a"></div>
<div class="a" style="left:856px;top:176px;width:15px;height:774px;background:#dadada"></div>
<div class="a" style="left:856px;top:161px;width:15px;height:15px;background:#fff;border:1px solid #ababab"></div>
<svg class="a" style="left:860px;top:166px" width="8" height="5"><path d="M0,4.5 h7 l-3.5,-4 z" fill="#606060"/></svg>
<div class="a" style="left:856px;top:360px;width:15px;height:123px;background:#fff;border:1px solid #ababab"></div>
<div class="a" style="left:856px;top:950px;width:15px;height:15px;background:#fff;border:1px solid #ababab"></div>
<svg class="a" style="left:860px;top:956px" width="8" height="5"><path d="M0,0.5 h7 l-3.5,4 z" fill="#606060"/></svg>
<div class="a" style="left:3px;top:968px;width:850px;height:15px;background:#dadada"></div>
<div class="a" style="left:3px;top:968px;width:15px;height:15px;background:#fff;border:1px solid #ababab"></div>
<svg class="a" style="left:8px;top:972px" width="5" height="8"><path d="M4.5,0 v7 l-4,-3.5 z" fill="#606060"/></svg>
<div class="a" style="left:18px;top:968px;width:602px;height:15px;background:#fff;border:1px solid #ababab"></div>
<div class="a" style="left:838px;top:968px;width:15px;height:15px;background:#fff;border:1px solid #ababab"></div>
<svg class="a" style="left:844px;top:972px" width="5" height="8"><path d="M0.5,0 v7 l4,-3.5 z" fill="#606060"/></svg>

<div id="status" class="a"></div>
<div class="t" style="left:9px;top:989px;font-size:11px;color:#505050">Page 2 of 5</div>
<div class="t" style="left:85px;top:989px;font-size:11px;color:#505050">693 words</div>
<svg class="a" style="left:157px;top:988px" width="15" height="12" viewBox="0 0 15 12">
<path d="M0.5,1 C2.5,0.5 4.5,0.5 7,1.5 V11.5 C4.5,10.5 2.5,10.5 0.5,11 Z" fill="none" stroke="#555" stroke-width="1"/>
<path d="M7,1.5 C9,0.5 11,0.5 13,1 V5" fill="none" stroke="#555" stroke-width="1"/>
<path d="M8.5,11 L14,5.5" stroke="#555" stroke-width="1.5"/></svg>
<div class="t" style="left:187px;top:989px;font-size:11px;color:#505050;letter-spacing:0.25px">English (United States)</div>
<svg class="a" style="left:581px;top:988px" width="14" height="13" viewBox="0 0 14 13">
<path d="M0.5,0.5 h5 l1.5,1 l1.5,-1 h5 v11 h-5 l-1.5,1 l-1.5,-1 h-5 z M7,1.5 v10" fill="none" stroke="#666"/>
<path d="M2,3.5 h3 M2,5.5 h3 M2,7.5 h3 M9,3.5 h3 M9,5.5 h3 M9,7.5 h3" stroke="#666" stroke-width="1"/></svg>
<div class="a" style="left:607px;top:985px;width:38px;height:21px;background:#c6c6c6"></div>
<svg class="a" style="left:619px;top:988px" width="14" height="13" viewBox="0 0 14 13">
<path d="M0.5,0.5 h13 v12 h-13 z" fill="none" stroke="#555"/>
<path d="M2,3.5 h10 M2,5.5 h10 M2,7.5 h10 M2,9.5 h10" stroke="#555" stroke-width="1"/></svg>
<svg class="a" style="left:657px;top:988px" width="15" height="14" viewBox="0 0 15 14">
<path d="M0.5,0.5 h12 v5 M0.5,0.5 v12 h6" fill="none" stroke="#666"/>
<path d="M2,3.5 h9 M2,5.5 h6 M2,7.5 h4" stroke="#666" stroke-width="1"/>
<circle cx="10.5" cy="10" r="3.5" fill="none" stroke="#666" stroke-width="1.2"/><path d="M8,8 L13,12" stroke="#666" stroke-width="1.2"/></svg>
<div class="a" style="left:687px;top:994px;width:6px;height:2px;background:#555"></div>
<div class="a" style="left:698px;top:994px;width:100px;height:1px;background:#a0a0a0"></div>
<div class="a" style="left:746px;top:989px;width:4px;height:11px;background:#555"></div>
<div class="a" style="left:802px;top:994px;width:9px;height:2px;background:#555"></div>
<div class="a" style="left:805.5px;top:990.5px;width:2px;height:9px;background:#555"></div>
<div class="t" style="left:826px;top:989px;font-size:11px;color:#505050">100%</div>

</div></body></html>
